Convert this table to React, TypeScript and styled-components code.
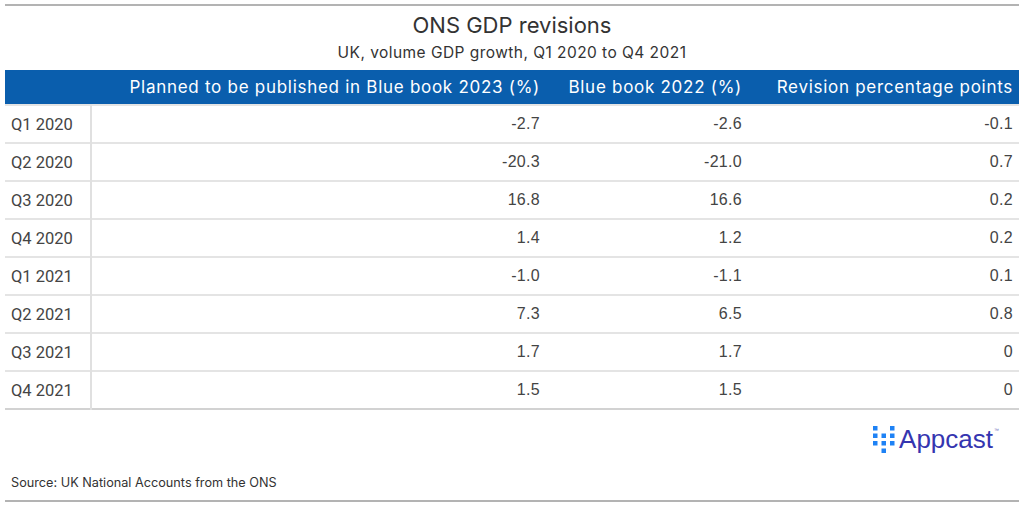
import styled, { createGlobalStyle } from 'styled-components'

const GlobalStyle = createGlobalStyle`
  html, body {
    margin: 0;
    padding: 0;
    background: #ffffff;
  }
  body {
    font-family: Inter, 'Liberation Sans', sans-serif;
    color: #333333;
  }
`

const rows: Array<[string, string, string, string]> = [
  ['Q1 2020', '-2.7', '-2.6', '-0.1'],
  ['Q2 2020', '-20.3', '-21.0', '0.7'],
  ['Q3 2020', '16.8', '16.6', '0.2'],
  ['Q4 2020', '1.4', '1.2', '0.2'],
  ['Q1 2021', '-1.0', '-1.1', '0.1'],
  ['Q2 2021', '7.3', '6.5', '0.8'],
  ['Q3 2021', '1.7', '1.7', '0'],
  ['Q4 2021', '1.5', '1.5', '0'],
]

const Page = styled.div`
  width: 1014px;
  height: 506px;
  margin: 0 5px;
  padding-top: 4px;
  box-sizing: border-box;
  display: flex;
  flex-direction: column;
`

const Rule = styled.div`
  height: 2px;
  background: #b3b3b3;
`

const Title = styled.h1`
  margin: 7px 0 0;
  font-family: Inter, sans-serif;
  font-weight: 400;
  font-size: 22px;
  line-height: 24px;
  letter-spacing: 0;
  text-align: center;
  color: #333333;
`

const Subtitle = styled.div`
  margin-top: 7px;
  font-family: Inter, sans-serif;
  font-size: 15.5px;
  line-height: 18px;
  letter-spacing: 0.45px;
  text-align: center;
  color: #333333;
`

const Table = styled.table`
  margin-top: 8px;
  width: 100%;
  border-collapse: collapse;
  table-layout: fixed;
`

const HeadRow = styled.tr`
  border-bottom: 2px solid #e4e4e4;
`

const HeadCell = styled.th`
  height: 34px;
  padding: 0 6px 0 0;
  background: #0a5ead;
  color: #ffffff;
  font-family: Inter, sans-serif;
  font-weight: 400;
  font-size: 17px;
  letter-spacing: 0.72px;
  text-align: right;
  white-space: nowrap;
`

const Row = styled.tr<{ $last?: boolean }>`
  border-bottom: ${p => (p.$last ? '2px solid #d2d2d2' : '2px solid #e4e4e4')};
`

const LabelCell = styled.td`
  height: 36px;
  padding: 0 0 0 6px;
  border-right: 2px solid #e0e0e0;
  font-family: Roboto, 'Open Sans', sans-serif;
  font-size: 16.5px;
  color: #444444;
  white-space: nowrap;
`

const ValueCell = styled.td`
  height: 36px;
  padding: 0 6px 0 0;
  font-family: 'Liberation Sans', Arial, sans-serif;
  font-size: 16px;
  letter-spacing: 0.3px;
  color: #444444;
  text-align: right;
`

const LogoRow = styled.div`
  display: flex;
  justify-content: flex-end;
  padding: 10px 20px 0 0;
  height: 38px;
`

const Logo = styled.div`
  display: flex;
  align-items: center;
  gap: 4px;
`

const LogoText = styled.span`
  font-family: 'Liberation Sans', Arial, sans-serif;
  font-size: 26px;
  line-height: 28px;
  color: #3535b0;
  letter-spacing: 0;
`

const Tm = styled.sup`
  font-size: 5px;
  vertical-align: top;
  line-height: 10px;
  color: #6a6ab8;
  margin-left: 1px;
`

const Source = styled.div`
  margin-top: 17px;
  padding-left: 6px;
  font-family: Inter, sans-serif;
  font-size: 12.7px;
  letter-spacing: 0;
  color: #333333;
`

const BottomRule = styled(Rule)`
  margin-top: auto;
  margin-bottom: 4px;
`

function AppcastMark() {
  const dots: Array<[number, number]> = [
    [0, 0], [0, 7.5], [0, 15],
    [8.5, 7.5], [8.5, 15], [8.5, 22.5],
    [17, 0], [17, 7.5], [17, 15],
  ]
  return (
    <svg width="22" height="27" viewBox="0 0 22 27">
      {dots.map(([x, y], i) => (
        <rect key={i} x={x} y={y} width="4.5" height="4.5" fill="#1e82f5" />
      ))}
    </svg>
  )
}

export default function App() {
  return (
    <>
      <GlobalStyle />
      <Page>
        <Rule />
        <Title>ONS GDP revisions</Title>
        <Subtitle>UK, volume GDP growth, Q1 2020 to Q4 2021</Subtitle>
        <Table>
          <colgroup>
            <col style={{ width: 86 }} />
            <col style={{ width: 455 }} />
            <col style={{ width: 202 }} />
            <col />
          </colgroup>
          <thead>
            <HeadRow>
              <HeadCell />
              <HeadCell>Planned to be published in Blue book 2023 (%)</HeadCell>
              <HeadCell>Blue book 2022 (%)</HeadCell>
              <HeadCell>Revision percentage points</HeadCell>
            </HeadRow>
          </thead>
          <tbody>
            {rows.map((r, i) => (
              <Row key={r[0]} $last={i === rows.length - 1}>
                <LabelCell>{r[0]}</LabelCell>
                <ValueCell>{r[1]}</ValueCell>
                <ValueCell>{r[2]}</ValueCell>
                <ValueCell>{r[3]}</ValueCell>
              </Row>
            ))}
          </tbody>
        </Table>
        <LogoRow>
          <Logo>
            <AppcastMark />
            <LogoText>
              Appcast<Tm>™</Tm>
            </LogoText>
          </Logo>
        </LogoRow>
        <Source>Source: UK National Accounts from the ONS</Source>
        <BottomRule />
      </Page>
    </>
  )
}
